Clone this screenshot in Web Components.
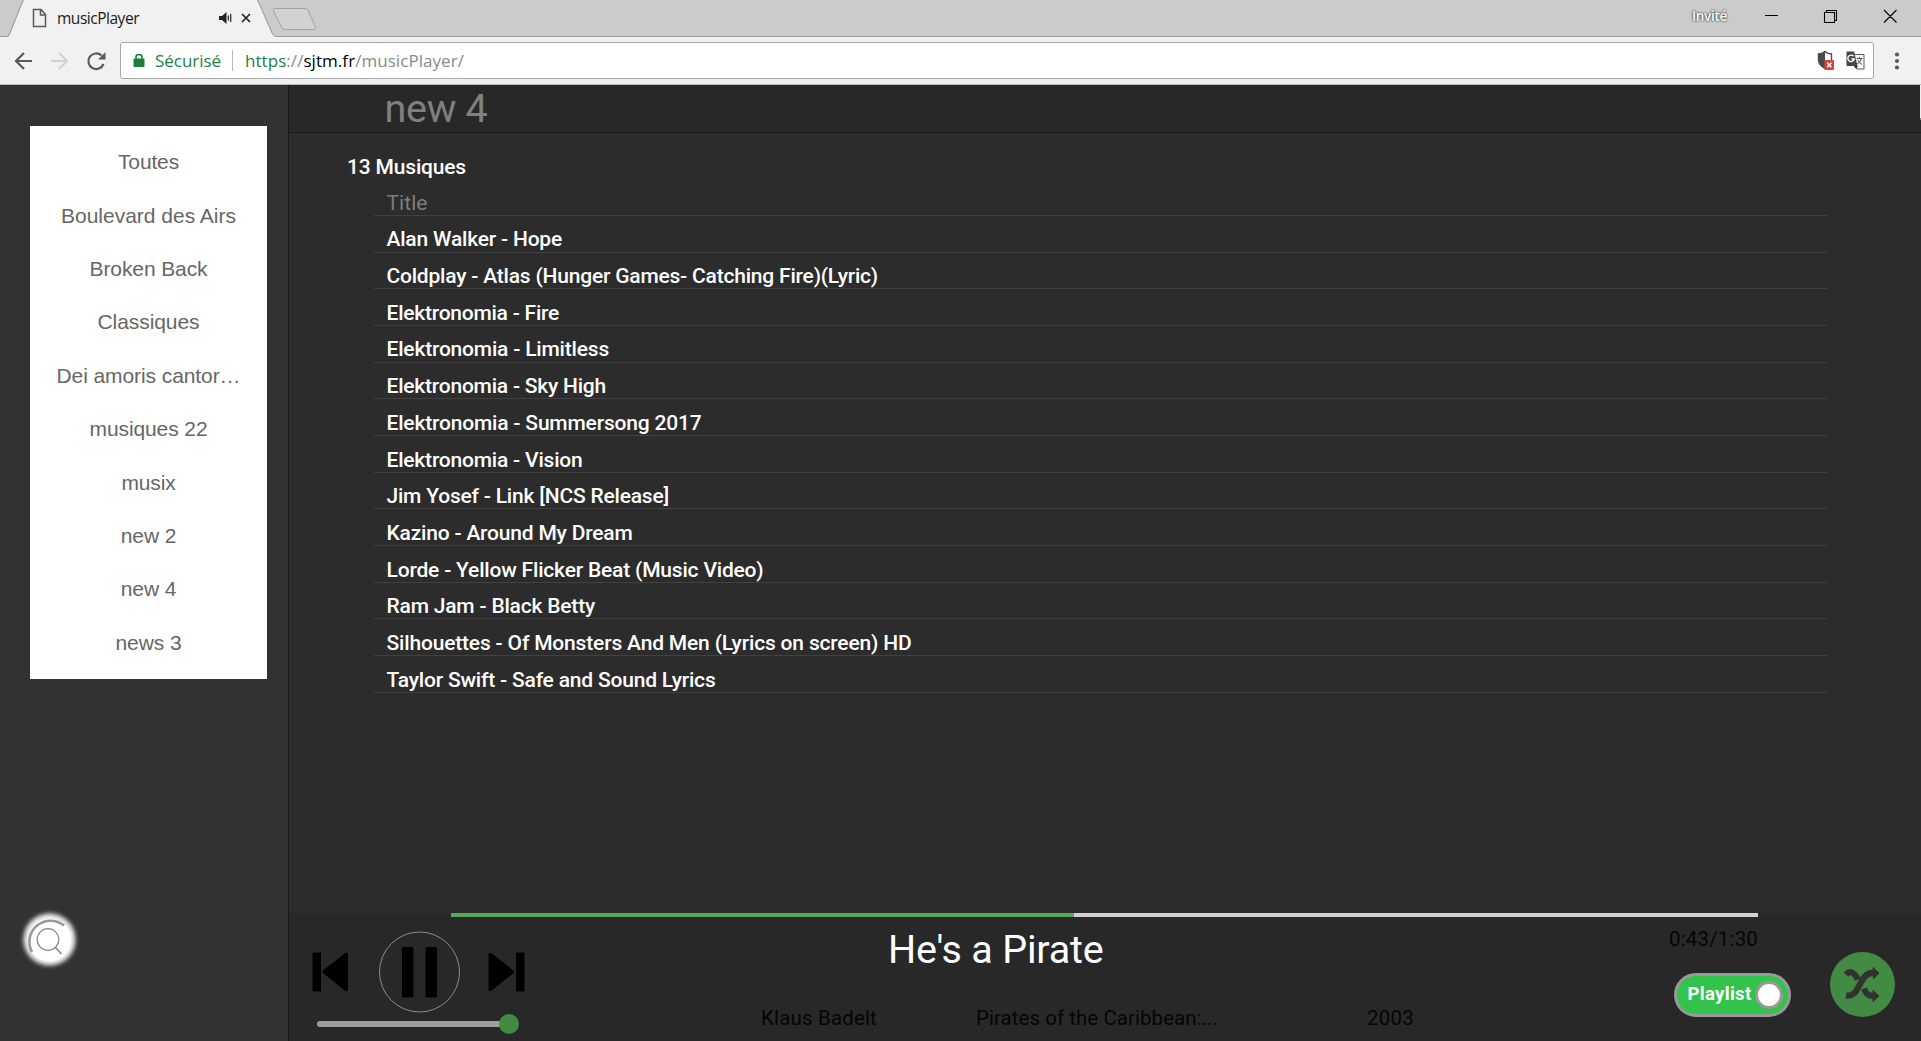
<!DOCTYPE html>
<html lang="fr">
<head>
<meta charset="utf-8">
<title>musicPlayer</title>
<style>
html,body{margin:0;height:100%;overflow:hidden;background:#2c2c2c}
body{font-family:Roboto,"Liberation Sans",sans-serif}
</style>
</head>
<body>
<music-app></music-app>
<script>
const define = (name, html, setup) => customElements.define(name, class extends HTMLElement {
  connectedCallback() {
    if (this.shadowRoot) return;
    this.attachShadow({mode: 'open'}).innerHTML = html;
    if (setup) setup(this, this.shadowRoot);
  }
});

/* A single line of text tracked to a given width */
define('fit-text', `<style>:host{display:inline-block;white-space:nowrap}span{display:inline-block}</style><span><slot></slot></span>`,
  (el, root) => {
    const w = +el.getAttribute('w'), s = root.querySelector('span');
    const natural = s.getBoundingClientRect().width;
    if (w && natural) s.style.letterSpacing = ((w - natural) / (el.textContent.length)) + 'px';
  });

define('tab-strip', `
<style>
:host{display:flex;height:37px;background:#cbcbcb;box-shadow:inset 0 -1px #9a9a9a;font-family:"Open Sans","Noto Sans",sans-serif}
.tab{width:277px;height:37px;display:grid}
.tab>*{grid-area:1/1}
.in{display:flex;align-items:center;padding-left:32px;height:31px;padding-top:4px;box-sizing:border-box;color:#1c1c1c;font-size:15.500px;line-height:20px}
.in fit-text{margin-left:10px;width:82px}
.snd{margin-left:80px}
.x{margin-left:9px}
.new{margin:7px 0 0 -5px}
.sp{flex:1}
.guest{font-size:13.500px;line-height:18px;margin-top:7px;width:35px;color:#fff;font-weight:600;text-shadow:0 0 2px #333,0 0 2px #555}
.win{margin:8px 23px 0 37px}
</style>
<div class="tab">
 <svg width="277" height="37"><path d="M7 37.500Q9 36 10 33L22 3Q23 .5 25 -1H256Q258 .5 259 3L272 33Q274 36.500 277 37.500Z" fill="#f1f1f1" stroke="#949494"/><path d="M10 37H275" stroke="#f1f1f1"/></svg>
 <div class="in">
  <svg width="15" height="20" fill="none" stroke="#5a5a5a" stroke-width="1.500"><path d="M1.500 1.500H9L13.500 6.500V18.500H1.500ZM8.500 1.500V7H13.500"/></svg>
  <fit-text w="82">musicPlayer</fit-text>
  <svg class="snd" width="13" height="12"><path d="M0 4H3L7.500 0V12L3 8H0Z" fill="#222"/><path d="M9.300 3.500V8.500M11.700 2V10" stroke="#222" stroke-width="1.200"/></svg>
  <svg class="x" width="10" height="10"><path d="M1 1L9 9M9 1L1 9" stroke="#222" stroke-width="1.700"/></svg>
 </div>
</div>
<svg class="new" width="46" height="24"><path d="M3 1.500H33Q35 1.500 36 3.500L43.500 20Q44 22.500 42 22.500H13Q10.500 22.500 9.500 20.500L1.500 4Q.8 1.500 3 1.500Z" fill="#d2d2d2" stroke="#a2a2a2"/></svg>
<div class="sp"></div>
<div class="guest"><fit-text w="35">Invité</fit-text></div>
<svg class="win" width="134" height="17" fill="none" stroke="#000" stroke-width="1.100"><path d="M1 7.500H14M60.500 4.500H70.500V14.500H60.500ZM62.500 4.500V2.500H72.500V12.500H70.500M120 2L132.500 14.500M132.500 2L120 14.500"/></svg>
`);

define('address-bar', `
<style>
:host{display:flex;align-items:center;height:48px;box-sizing:border-box;background:#f1f1f1;border-bottom:1px solid #bcbcbc;font-family:"Open Sans","Noto Sans",sans-serif}
.nav{margin-left:14px}
.box{display:flex;align-items:center;box-sizing:border-box;width:1754px;height:37px;margin-left:12px;background:#fff;border:1px solid #a9a9a9;border-radius:3px;font-size:17px;line-height:24px;color:#8a8a8a}
.lock{margin-left:12px}
.sec{margin-left:10px;width:67px;color:#217f45}
.sep{width:1px;height:21px;background:#b8b8b8;margin:0 12px 0 10px}
.ext{margin-left:auto;margin-right:7px}
.dots{margin-left:18px}
</style>
<svg class="nav" width="94" height="22" fill="none" stroke-width="2.200"><path d="M18 11H2M10 3L2 11L10 19" stroke="#5a5a5a"/><path d="M37 11H53M45 3L53 11L45 19" stroke="#d2d2d2"/><path d="M89.500 14A7.800 7.800 0 1 1 87.500 5.500" stroke="#5a5a5a"/><path d="M91.500 2V9.500H84Z" fill="#5a5a5a"/></svg>
<div class="box">
 <svg class="lock" width="12" height="15"><rect x=".5" y="5.500" width="11" height="8.500" rx="1" fill="#1a7f37"/><path d="M3 6V4Q3 1.500 6 1.500T9 4V6" fill="none" stroke="#1a7f37" stroke-width="1.600"/></svg>
 <div class="sec"><fit-text w="66">Sécurisé</fit-text></div>
 <div class="sep"></div>
 <fit-text w="219"><span style="color:#217f45">https</span>://<span style="color:#000">sjtm.fr</span>/musicPlayer/</fit-text>
 <svg class="ext" width="50" height="22">
  <path d="M9 1.500Q12 4 15.500 4V10Q15 15 9 18.500Q3 15 2.500 10V4Q6 4 9 1.500Z" fill="#fff" stroke="#4b4b4b" stroke-width="1.400"/><path d="M9 1Q6 4 2 4V10Q2.500 15.500 9 19Z" fill="#4b4b4b"/>
  <rect x="8.500" y="10" width="9.500" height="10" rx="1" fill="#d9423f"/><path d="M11.200 12.800L15.400 17.200M15.400 12.800L11.200 17.200" stroke="#fff" stroke-width="1.500"/>
  <path d="M38 4.500H48V19H41L38 15" fill="#f7f7f7" stroke="#5b5b5b"/><path d="M31 1.500H38L41.500 16H31Q30.500 16 30.500 15V2.500Q30.500 1.500 31 1.500Z" fill="#454545"/><path d="M38 16H42L40 19Z" fill="#333"/>
  <path d="M37.500 6.300A3.200 3.200 0 1 0 38.200 9H35.300" fill="none" stroke="#fff" stroke-width="1.400"/><path d="M40.500 8.500H46.500M43.500 7V8.500M45.500 8.500Q44.500 12.500 41 14M41.800 10Q43 13 46 14.500" fill="none" stroke="#555"/>
 </svg>
</div>
<svg class="dots" width="10" height="20" fill="#5a5a5a"><circle cx="5" cy="3.500" r="2.100"/><circle cx="5" cy="10" r="2.100"/><circle cx="5" cy="16.500" r="2.100"/></svg>
`);

define('playlist-menu', `
<style>
:host{display:flex;flex-direction:column;justify-content:space-between;padding:41px 0 66px 30px;background:#323232;border-right:1px solid #1a1a1a;width:258px}
ul{list-style:none;margin:0;padding:9.600px 0 9.400px;width:237px;height:534px;background:#fff;display:grid;grid-template-rows:repeat(10,1fr);justify-items:center;align-items:center;color:#666;font:21px/24px "Liberation Sans",Arial,sans-serif}
.search{width:70px;height:70px;margin-left:-15px;display:block}
</style>
<ul></ul>
<svg class="search" viewBox="15 905 70 70"><defs><filter id="glow" x="-30%" y="-30%" width="160%" height="160%"><feGaussianBlur stdDeviation="2"/></filter></defs>
<circle cx="49.500" cy="939.500" r="26" fill="#eee" filter="url(#glow)"/><circle cx="49.500" cy="940" r="21.500" fill="#fff"/>
<path d="M64 925.600A21.100 21.100 0 0 0 32 952" fill="none" stroke="#999" stroke-width="2.600"/>
<circle cx="48" cy="939.500" r="10.800" fill="none" stroke="#888" stroke-width="1.200"/><path d="M55.500 947.500L61.500 954" stroke="#888" stroke-width="1.600"/></svg>
`, (el, root) => {
  root.querySelector('ul').innerHTML = [['Toutes',61],['Boulevard des Airs',175],['Broken Back',118],['Classiques',102],['Dei amoris cantor…',184],['musiques 22',118],['musix',54],['new 2',55.5],['new 4',55.5],['news 3',66]]
    .map(([t, w]) => `<li><fit-text w="${w}">${t}</fit-text></li>`).join('');
});

define('track-list', `
<style>
:host{display:block;flex:1;min-height:0;background:#2c2c2c}
header{height:47px;background:#282828;border-bottom:1px solid #191919;padding-left:95.500px;color:#808080;font-size:39.500px;line-height:48px}
.count{padding:22px 0 0 58px;color:#fff;font-weight:500;font-size:21px;line-height:24px}
ul{list-style:none;margin:.2px 0 0 85px;padding:0;width:1453px;color:#fff;font-size:21px;line-height:24px;font-weight:500}
li{height:36.690px;box-sizing:border-box;border-bottom:1px solid #414141;display:flex;align-items:flex-end;padding:0 0 .2px 12.500px}
li:first-child{color:#7c7c7c;font-weight:400}
</style>
<header><fit-text w="103">new 4</fit-text></header>
<div class="count"><fit-text w="119">13 Musiques</fit-text></div>
<ul></ul>
`, (el, root) => {
  root.querySelector('ul').innerHTML = [['Title',41],['Alan Walker - Hope',175.5],['Coldplay - Atlas (Hunger Games- Catching Fire)(Lyric)',491.5],['Elektronomia - Fire',172.5],['Elektronomia - Limitless',222.5],['Elektronomia - Sky High',219.5],['Elektronomia - Summersong 2017',315],['Elektronomia - Vision',196],['Jim Yosef - Link [NCS Release]',282.5],['Kazino - Around My Dream',246],['Lorde - Yellow Flicker Beat (Music Video)',377],['Ram Jam - Black Betty',208.5],['Silhouettes - Of Monsters And Men (Lyrics on screen) HD',525],['Taylor Swift - Safe and Sound Lyrics',329]]
    .map(([t, w]) => `<li><fit-text w="${w}">${t}</fit-text></li>`).join('');
});

define('player-bar', `
<style>
:host{display:block;height:128px;background:#282828;color:#050505;font-size:20.500px;line-height:24px}
.progress{display:flex;height:4px;margin-left:162px;width:1307px;background:#d3d3d3}
.progress i{width:623px;background:#55a855}
.body{display:flex;height:124px;align-items:flex-start}
.controls{width:449px;padding-left:23px}
.buttons{display:flex;align-items:center;height:82px;margin-top:14px}
.pause{margin:0 27px 0 30px}
.vol{display:flex;align-items:center;height:20px;margin:1px 0 0 5px}
.vol i{width:188px;height:6px;border-radius:3px;background:#a09ea0}
.vol b{width:20px;height:20px;border-radius:50%;background:#438a43;margin-left:-6px}
.meta{width:908px}
.title{color:#fff;font-size:39.500px;line-height:46px;padding:9.500px 0 0 127px}
.sub{display:flex;margin-top:33.500px}
.sub fit-text:nth-child(1){width:215px}.sub fit-text:nth-child(2){width:391px}
.side{width:161px;padding-top:10px}
.shuffle{margin-top:35px}
</style>
<div class="progress"><i></i></div>
<div class="body">
 <div class="controls">
  <div class="buttons">
   <svg width="37" height="40"><path d="M1.500 .5H8Q9 .5 9 1.500V38.500Q9 39.500 8 39.500H1.500Q.5 39.500 .5 38.500V1.500Q.5 .5 1.500 .5ZM11 18.500L33 1.200Q35 0 36 1.500V38.500Q35 40 33 38.800L11 21Q10 19.800 11 18.500Z"/></svg>
   <svg class="pause" width="82" height="82"><circle cx="40.500" cy="41" r="40" fill="none" stroke="#8c8c8c"/><rect x="23" y="16" width="11.500" height="50.500" rx="1"/><rect x="46.500" y="16" width="11.500" height="50.500" rx="1"/></svg>
   <svg width="38" height="40"><path d="M29 .5H35.500Q36.500 .5 36.500 1.500V38.500Q36.500 39.500 35.500 39.500H29Q28 39.500 28 38.500V1.500Q28 .5 29 .5ZM25.500 18.500L3.500 1.200Q1.500 0 .5 1.500V38.500Q1.500 40 3.500 38.800L25.500 21Q26.500 19.800 25.500 18.500Z"/></svg>
  </div>
  <div class="vol"><i></i><b></b></div>
 </div>
 <div class="meta">
  <div class="title"><fit-text w="215.5">He's a Pirate</fit-text></div>
  <div class="sub"><fit-text w="116">Klaus Badelt</fit-text><fit-text w="242">Pirates of the Caribbean:...</fit-text><fit-text w="47">2003</fit-text></div>
 </div>
 <div class="side">
  <fit-text w="89">0:43/1:30</fit-text>
  <playlist-switch><fit-text w="64">Playlist</fit-text></playlist-switch>
 </div>
 <svg class="shuffle" width="65" height="65" viewBox="1830 952 65 65"><circle cx="1862.500" cy="984.500" r="32.500" fill="#438a43"/>
  <g fill="none" stroke="#323232" stroke-width="6.200"><path d="M1846 974.500C1850 970 1854 972 1858 979.500M1846 995.500C1861 998 1858 972 1874 973M1864 988.500C1866.500 995 1869 996 1874 996"/></g>
  <path d="M1873 967.500L1879 973L1873.500 979ZM1873 990.500L1879 996L1873 1001.500Z" fill="#323232" stroke="#323232" stroke-linejoin="round"/></svg>
</div>
`);

define('playlist-switch', `
<style>
:host{display:flex;align-items:center;box-sizing:border-box;width:117px;height:44px;margin:22px 0 0 5px;padding-left:10.500px;border:3px solid #999;border-radius:22px;background:#32c34b;color:#fff;font:bold 18.500px/20px Roboto,sans-serif}
slot{display:block;width:66px;margin-top:-2px}
i{width:22px;height:22px;border:3px solid #999;border-radius:50%;background:#fff;margin-left:1px}
</style>
<slot></slot><i></i>
`);

define('music-app', `
<style>
:host{display:flex;flex-direction:column;width:1921px;height:1041px}
main{display:flex;flex:1;min-height:0}
.content{display:flex;flex-direction:column;flex:1;position:relative}
.edge{position:absolute;right:0;top:0;width:1px;height:33px;background:#f0f0f0;border-bottom:2px solid #888}
</style>
<tab-strip></tab-strip><address-bar></address-bar>
<main><playlist-menu></playlist-menu><div class="content"><track-list></track-list><player-bar></player-bar><div class="edge"></div></div></main>
`);
</script>
</body>
</html>
